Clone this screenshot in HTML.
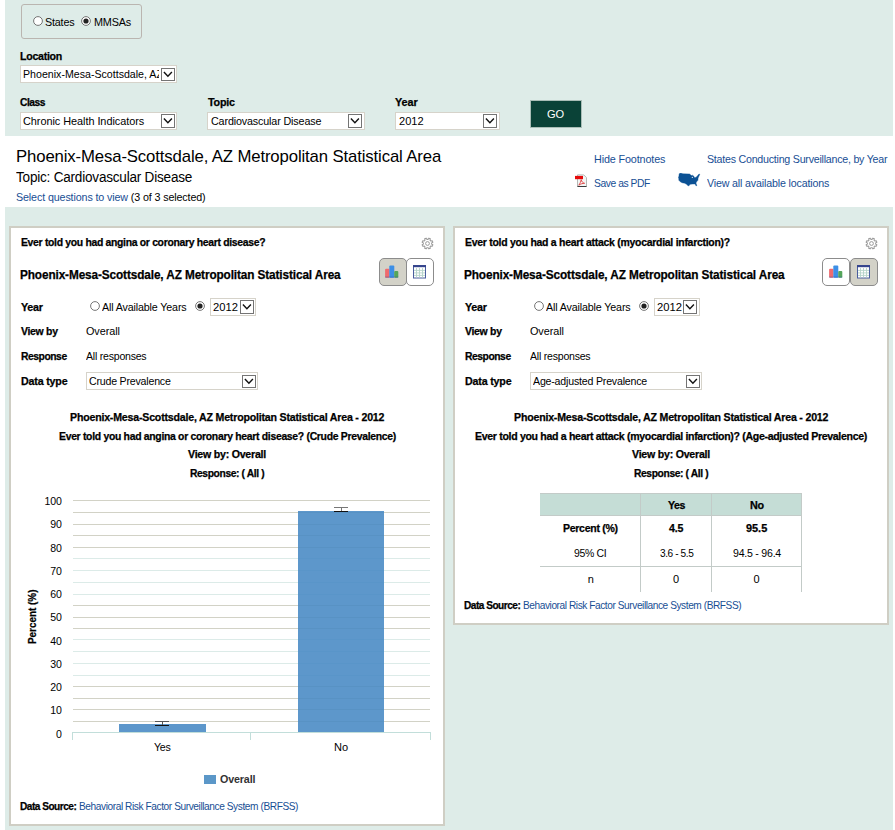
<!DOCTYPE html>
<html><head><meta charset="utf-8"><title>BRFSS Prevalence and Trends Data</title>
<style>
html,body{margin:0;padding:0;background:#fff;}
body{width:895px;height:830px;position:relative;overflow:hidden;font-family:"Liberation Sans",sans-serif;font-size:11px;color:#000;}
.x{position:absolute;white-space:nowrap;line-height:20px;height:20px;transform-origin:0 0;font-size:11px;}
.bd{font-weight:bold;-webkit-text-stroke:0.25px currentColor;}
.bn{font-weight:bold;}
.b{position:absolute;box-sizing:border-box;}
.g{position:absolute;background:#deece8;}
.sel{position:absolute;box-sizing:border-box;background:#fff;border:1px solid #d6d3ca;height:18px;}
a{color:#174e94;text-decoration:none;}
.card{position:absolute;background:#fff;border:2px solid #cfcec4;box-sizing:border-box;}
.btn{position:absolute;box-sizing:border-box;width:28px;height:28px;border:1px solid #8c8c8c;border-radius:5px;background:#fff;}
.btn.on{background:#d3d2c8;}
.hl{position:absolute;height:1px;}
</style></head><body>
<div class="g" style="left:5px;top:0;width:888px;height:136px;"></div>
<div class="g" style="left:5px;top:207px;width:888px;height:623px;"></div>

<div class="b" style="left:21px;top:4px;width:121px;height:35px;border:1px solid #bab5b0;border-radius:3px;"></div>

<div class="b" style="left:530px;top:100px;width:52px;height:28px;background:#0a4237;border:1px solid #a9bdb6;"></div>

<!-- pdf icon -->
<svg class="b" style="left:574px;top:174px;" width="14" height="14" viewBox="0 0 14 14"><path d="M3.500 0.900h6.300l2.700 2.700v8.900h-9z" fill="#f3f6f5" stroke="#b4b8b6" stroke-width="1"/><rect x="3.500" y="12" width="9" height="1" fill="#3a3a3a"/><rect x="1" y="1.900" width="8" height="3.300" fill="#e60a0a"/><path d="M4.800 11.200c1.200-1.800 2.200-3.800 2.400-5.800M4.800 11.200c1.800-1.300 3.800-1.900 5.800-1.900M7.200 6c0.500 1.600 1.800 3 3.400 3.300" fill="none" stroke="#e03c3c" stroke-width="0.900"/></svg>
<!-- us map -->
<svg class="b" style="left:678px;top:173px;" width="23" height="14" viewBox="0 0 23 14"><path d="M1.15 0.80 L2.70 0.05 L4.90 0.80 L11.60 1.00 L13.40 2.60 L14.30 2.15 L15.70 3.00 L16.30 4.60 L17.90 4.40 L19.70 2.60 L21.00 1.00 L21.80 1.25 L21.00 3.00 L20.10 5.05 L19.90 7.30 L18.80 8.60 L17.90 10.00 L18.60 11.75 L18.80 12.60 L18.10 12.90 L17.00 10.90 L14.30 11.10 L12.10 11.30 L10.75 12.90 L9.85 12.60 L8.50 11.30 L6.70 10.20 L4.05 9.70 L2.05 8.60 L0.90 7.30 L0.70 5.05 L0.25 4.40 L0.90 3.30Z" fill="#0b5194" stroke="#0b5194" stroke-width="0.400" stroke-linejoin="round"/><circle cx="14.300" cy="4.400" r="0.550" fill="#fff"/></svg>

<svg class="b" style="left:31.6px;top:14.7px;" width="12" height="12" viewBox="0 0 12 12"><circle cx="6" cy="6" r="4.400" fill="#fff" stroke="#666" stroke-width="0.900"/></svg>
<svg class="b" style="left:80.4px;top:14.7px;" width="12" height="12" viewBox="0 0 12 12"><circle cx="6" cy="6" r="4.400" fill="#fff" stroke="#666" stroke-width="0.900"/><circle cx="6" cy="6" r="2.600" fill="#222"/></svg>
<div class="sel" style="left:20px;top:65px;width:157px;"></div><svg class="b" style="left:161px;top:68px;" width="14" height="13" viewBox="0 0 14 13"><rect x="0.500" y="0.500" width="13" height="12" fill="#fff" stroke="#747474" stroke-width="1"/><path d="M2.900 4.00 L6.900 8.30 L10.900 4.00" fill="none" stroke="#111" stroke-width="1.400"/></svg>
<div class="sel" style="left:20px;top:112px;width:157px;"></div><svg class="b" style="left:161px;top:114px;" width="14" height="14" viewBox="0 0 14 14"><rect x="0.500" y="0.500" width="13" height="13" fill="#fff" stroke="#747474" stroke-width="1"/><path d="M2.900 4.50 L6.900 8.80 L10.900 4.50" fill="none" stroke="#111" stroke-width="1.400"/></svg>
<div class="sel" style="left:207px;top:112px;width:158px;"></div><svg class="b" style="left:348px;top:114px;" width="14" height="14" viewBox="0 0 14 14"><rect x="0.500" y="0.500" width="13" height="13" fill="#fff" stroke="#747474" stroke-width="1"/><path d="M2.900 4.50 L6.900 8.80 L10.900 4.50" fill="none" stroke="#111" stroke-width="1.400"/></svg>
<div class="sel" style="left:395px;top:112px;width:105px;"></div><svg class="b" style="left:483px;top:114px;" width="14" height="14" viewBox="0 0 14 14"><rect x="0.500" y="0.500" width="13" height="13" fill="#fff" stroke="#747474" stroke-width="1"/><path d="M2.900 4.50 L6.900 8.80 L10.900 4.50" fill="none" stroke="#111" stroke-width="1.400"/></svg>
<div class="card" style="left:9px;top:226px;width:436px;height:600px;"></div>
<svg class="b" style="left:421.1px;top:237.100px;" width="13" height="13" viewBox="0 0 13 13"><path d="M10.65 7.16 L11.84 7.83 L11.21 9.34 L9.90 8.97 L8.97 9.90 L9.34 11.21 L7.83 11.84 L7.16 10.65 L5.84 10.65 L5.17 11.84 L3.66 11.21 L4.03 9.90 L3.10 8.97 L1.79 9.34 L1.16 7.83 L2.35 7.16 L2.35 5.84 L1.16 5.17 L1.79 3.66 L3.10 4.03 L4.03 3.10 L3.66 1.79 L5.17 1.16 L5.84 2.35 L7.16 2.35 L7.83 1.16 L9.34 1.79 L8.97 3.10 L9.90 4.03 L11.21 3.66 L11.84 5.17 L10.65 5.84Z" fill="none" stroke="#9a9a9a" stroke-width="1.050" stroke-linejoin="round"/><circle cx="6.500" cy="6.500" r="1.900" fill="none" stroke="#9a9a9a" stroke-width="1"/></svg>
<div class="btn on" style="left:379px;top:258px;width:27.500px;"><svg style="position:absolute;left:4px;top:5px" width="18" height="16" viewBox="0 0 18 16"><rect x="1.100" y="4.700" width="4.400" height="9.100" rx="1" fill="#ef6b6e"/><rect x="5.300" y="1.600" width="5" height="12.200" rx="1" fill="#3d8fe6"/><rect x="10.200" y="7" width="4.100" height="6.800" rx="1" fill="#55a65a"/><rect x="1.100" y="12.500" width="13.200" height="1.300" fill="#2a50a8" fill-opacity="0.350"/></svg></div>
<div class="btn" style="left:406px;top:258px;"><svg style="position:absolute;left:4px;top:5px" width="18" height="18" viewBox="0 0 18 18"><rect x="2.500" y="1.600" width="12" height="12.400" fill="#fff" stroke="#4a5e9e" stroke-width="1"/><rect x="2" y="1.100" width="13" height="2.100" fill="#33438c"/><path d="M5.500 4v9.500M8.500 4v9.500M11.500 4v9.500M3 6.400h11M3 8.900h11M3 11.400h11" stroke="#b4d4c8" stroke-width="0.900" fill="none"/></svg></div>
<svg class="b" style="left:88.8px;top:300.3px;" width="12" height="12" viewBox="0 0 12 12"><circle cx="6" cy="6" r="4.400" fill="#fff" stroke="#666" stroke-width="0.900"/></svg>
<svg class="b" style="left:193.6px;top:300.3px;" width="12" height="12" viewBox="0 0 12 12"><circle cx="6" cy="6" r="4.400" fill="#fff" stroke="#666" stroke-width="0.900"/><circle cx="6" cy="6" r="2.600" fill="#222"/></svg>
<div class="sel" style="left:210px;top:298px;width:46px;"></div><svg class="b" style="left:240px;top:300px;" width="14" height="14" viewBox="0 0 14 14"><rect x="0.500" y="0.500" width="13" height="13" fill="#fff" stroke="#747474" stroke-width="1"/><path d="M2.900 4.50 L6.900 8.80 L10.900 4.50" fill="none" stroke="#111" stroke-width="1.400"/></svg>
<div class="sel" style="left:86px;top:372px;width:172px;"></div><svg class="b" style="left:242px;top:375px;" width="14" height="13" viewBox="0 0 14 13"><rect x="0.500" y="0.500" width="13" height="12" fill="#fff" stroke="#747474" stroke-width="1"/><path d="M2.900 4.00 L6.900 8.30 L10.900 4.00" fill="none" stroke="#111" stroke-width="1.400"/></svg>
<div class="card" style="left:453px;top:226px;width:436px;height:399px;"></div>
<svg class="b" style="left:865.1px;top:237.100px;" width="13" height="13" viewBox="0 0 13 13"><path d="M10.65 7.16 L11.84 7.83 L11.21 9.34 L9.90 8.97 L8.97 9.90 L9.34 11.21 L7.83 11.84 L7.16 10.65 L5.84 10.65 L5.17 11.84 L3.66 11.21 L4.03 9.90 L3.10 8.97 L1.79 9.34 L1.16 7.83 L2.35 7.16 L2.35 5.84 L1.16 5.17 L1.79 3.66 L3.10 4.03 L4.03 3.10 L3.66 1.79 L5.17 1.16 L5.84 2.35 L7.16 2.35 L7.83 1.16 L9.34 1.79 L8.97 3.10 L9.90 4.03 L11.21 3.66 L11.84 5.17 L10.65 5.84Z" fill="none" stroke="#9a9a9a" stroke-width="1.050" stroke-linejoin="round"/><circle cx="6.500" cy="6.500" r="1.900" fill="none" stroke="#9a9a9a" stroke-width="1"/></svg>
<div class="btn" style="left:822px;top:258px;width:27.500px;"><svg style="position:absolute;left:5px;top:5px" width="18" height="16" viewBox="0 0 18 16"><rect x="1.100" y="4.700" width="4.400" height="9.100" rx="1" fill="#ef6b6e"/><rect x="5.300" y="1.600" width="5" height="12.200" rx="1" fill="#3d8fe6"/><rect x="10.200" y="7" width="4.100" height="6.800" rx="1" fill="#55a65a"/><rect x="1.100" y="12.500" width="13.200" height="1.300" fill="#2a50a8" fill-opacity="0.350"/></svg></div>
<div class="btn on" style="left:850px;top:258px;"><svg style="position:absolute;left:4px;top:5px" width="18" height="18" viewBox="0 0 18 18"><rect x="2.500" y="1.600" width="12" height="12.400" fill="#fff" stroke="#4a5e9e" stroke-width="1"/><rect x="2" y="1.100" width="13" height="2.100" fill="#33438c"/><path d="M5.500 4v9.500M8.500 4v9.500M11.500 4v9.500M3 6.400h11M3 8.900h11M3 11.400h11" stroke="#b4d4c8" stroke-width="0.900" fill="none"/></svg></div>
<svg class="b" style="left:532.8px;top:300.3px;" width="12" height="12" viewBox="0 0 12 12"><circle cx="6" cy="6" r="4.400" fill="#fff" stroke="#666" stroke-width="0.900"/></svg>
<svg class="b" style="left:637.6px;top:300.3px;" width="12" height="12" viewBox="0 0 12 12"><circle cx="6" cy="6" r="4.400" fill="#fff" stroke="#666" stroke-width="0.900"/><circle cx="6" cy="6" r="2.600" fill="#222"/></svg>
<div class="sel" style="left:654px;top:298px;width:46px;"></div><svg class="b" style="left:683px;top:300px;" width="14" height="14" viewBox="0 0 14 14"><rect x="0.500" y="0.500" width="13" height="13" fill="#fff" stroke="#747474" stroke-width="1"/><path d="M2.900 4.50 L6.900 8.80 L10.900 4.50" fill="none" stroke="#111" stroke-width="1.400"/></svg>
<div class="sel" style="left:530px;top:372px;width:172px;"></div><svg class="b" style="left:686px;top:375px;" width="14" height="13" viewBox="0 0 14 13"><rect x="0.500" y="0.500" width="13" height="12" fill="#fff" stroke="#747474" stroke-width="1"/><path d="M2.900 4.00 L6.900 8.30 L10.900 4.00" fill="none" stroke="#111" stroke-width="1.400"/></svg>
<svg class="b" style="left:0;top:480px" width="445" height="320" viewBox="0 480 445 320" shape-rendering="crispEdges">
<rect x="73" y="500" width="357" height="1" fill="#d2d2c6"/>
<rect x="73" y="512" width="357" height="1" fill="#d2d2c6"/>
<rect x="73" y="524" width="357" height="1" fill="#d2d2c6"/>
<rect x="73" y="535" width="357" height="1" fill="#d2d2c6"/>
<rect x="73" y="547" width="357" height="1" fill="#d2d2c6"/>
<rect x="73" y="558" width="357" height="1" fill="#dcebe8"/>
<rect x="73" y="570" width="357" height="1" fill="#dcebe8"/>
<rect x="73" y="582" width="357" height="1" fill="#dcebe8"/>
<rect x="73" y="594" width="357" height="1" fill="#dcebe8"/>
<rect x="73" y="605" width="357" height="1" fill="#d2d2c6"/>
<rect x="73" y="617" width="357" height="1" fill="#d2d2c6"/>
<rect x="73" y="628" width="357" height="1" fill="#d2d2c6"/>
<rect x="73" y="639" width="357" height="1" fill="#dcebe8"/>
<rect x="73" y="651" width="357" height="1" fill="#dcebe8"/>
<rect x="73" y="663" width="357" height="1" fill="#dcebe8"/>
<rect x="73" y="675" width="357" height="1" fill="#dcebe8"/>
<rect x="73" y="686" width="357" height="1" fill="#d2d2c6"/>
<rect x="73" y="698" width="357" height="1" fill="#d2d2c6"/>
<rect x="73" y="709" width="357" height="1" fill="#d2d2c6"/>
<rect x="73" y="721" width="357" height="1" fill="#d2d2c6"/>
<rect x="119" y="724" width="87" height="8" fill="#4789c4" fill-opacity="0.880"/>
<rect x="298" y="511" width="86" height="221" fill="#4789c4" fill-opacity="0.880"/>
<rect x="72" y="732" width="359" height="1" fill="#c2deda"/>
<rect x="72" y="732" width="1" height="8" fill="#c2deda"/>
<rect x="250" y="732" width="1" height="8" fill="#c2deda"/>
<rect x="430" y="732" width="1" height="8" fill="#c2deda"/>
<rect x="155" y="721" width="14" height="1" fill="#555"/><rect x="155" y="725" width="14" height="1" fill="#111"/><rect x="162" y="722" width="1" height="3" fill="#555"/>
<rect x="334" y="507" width="14" height="1" fill="#777"/><rect x="334" y="511" width="14" height="1" fill="#111"/><rect x="341" y="508" width="1" height="3" fill="#777"/>
<rect x="204" y="775" width="12" height="9" fill="#5b97c8"/>
</svg>
<div class="x bd" style="left:21.700px;top:643.500px;transform-origin:0 0;transform:rotate(-90deg) scaleX(0.900);">Percent (%)</div>
<div class="b" style="left:540px;top:494px;width:262px;height:22px;background:#c5ddd6;"></div>
<div class="hl" style="left:540px;top:493px;width:262px;background:#c3cbc8;"></div>
<div class="hl" style="left:540px;top:515px;width:262px;background:#c3cbc8;"></div>
<div class="hl" style="left:540px;top:566px;width:262px;background:#c3cbc8;"></div>
<div class="b" style="left:640px;top:493px;width:1px;height:99px;background:#c3cbc8;"></div>
<div class="b" style="left:711px;top:493px;width:1px;height:99px;background:#c3cbc8;"></div>
<div class="b" style="left:801px;top:493px;width:1px;height:99px;background:#c3cbc8;"></div>
<div class="b" style="left:21px;top:66px;width:138px;height:16px;overflow:hidden;"><div class="x" style="left:1.6px;top:-2px;transform:scaleX(.9655);">Phoenix-Mesa-Scottsdale, AZ</div></div>
<div class="x" style="left:32px;width:30px;text-align:right;top:724.19px;transform-origin:100% 0;transform:scaleX(0.96);">0</div>
<div class="x" style="left:32px;width:30px;text-align:right;top:700.19px;transform-origin:100% 0;transform:scaleX(0.96);">10</div>
<div class="x" style="left:32px;width:30px;text-align:right;top:677.19px;transform-origin:100% 0;transform:scaleX(0.96);">20</div>
<div class="x" style="left:32px;width:30px;text-align:right;top:654.19px;transform-origin:100% 0;transform:scaleX(0.96);">30</div>
<div class="x" style="left:32px;width:30px;text-align:right;top:631.19px;transform-origin:100% 0;transform:scaleX(0.96);">40</div>
<div class="x" style="left:32px;width:30px;text-align:right;top:607.19px;transform-origin:100% 0;transform:scaleX(0.96);">50</div>
<div class="x" style="left:32px;width:30px;text-align:right;top:584.19px;transform-origin:100% 0;transform:scaleX(0.96);">60</div>
<div class="x" style="left:32px;width:30px;text-align:right;top:561.19px;transform-origin:100% 0;transform:scaleX(0.96);">70</div>
<div class="x" style="left:32px;width:30px;text-align:right;top:538.19px;transform-origin:100% 0;transform:scaleX(0.96);">80</div>
<div class="x" style="left:32px;width:30px;text-align:right;top:514.19px;transform-origin:100% 0;transform:scaleX(0.96);">90</div>
<div class="x" style="left:32px;width:30px;text-align:right;top:491.19px;transform-origin:100% 0;transform:scaleX(0.96);">100</div>
<div class="x" style="left:44.66px;top:12.19px;transform:scaleX(0.9796);letter-spacing:-0.189px;">States</div>
<div class="x" style="left:93.91px;top:12.19px;transform:scaleX(0.9840);letter-spacing:-0.172px;">MMSAs</div>
<div class="x bd" style="left:20.48px;top:46.19px;transform:scaleX(0.9634);letter-spacing:-0.282px;">Location</div>
<div class="x bd" style="left:20.27px;top:92.19px;transform:scaleX(0.9337);letter-spacing:-0.519px;">Class</div>
<div class="x" style="left:23.38px;top:111.19px;transform:scaleX(0.9913);letter-spacing:-0.051px;">Chronic Health Indicators</div>
<div class="x bd" style="left:207.71px;top:92.19px;transform:scaleX(0.9756);letter-spacing:-0.201px;">Topic</div>
<div class="x" style="left:210.52px;top:111.19px;transform:scaleX(0.9752);letter-spacing:-0.140px;">Cardiovascular Disease</div>
<div class="x bd" style="left:394.95px;top:92.19px;transform:scaleX(0.9858);letter-spacing:-0.094px;">Year</div>
<div class="x" style="left:398.56px;top:111.19px;transform:scaleX(1.0053);">2012</div>
<div class="x" style="left:547.40px;top:103.69px;transform:scaleX(1.0080);color:#fff;">GO</div>
<div class="x" style="left:15.84px;top:146.61px;font-size:17px;transform:scaleX(0.9839);letter-spacing:-0.129px;">Phoenix-Mesa-Scottsdale, AZ Metropolitan Statistical Area</div>
<div class="x" style="left:16.00px;top:167.15px;font-size:14px;transform:scaleX(0.9681);letter-spacing:-0.221px;">Topic: Cardiovascular Disease</div>
<div class="x" style="left:15.58px;top:187.19px;transform:scaleX(0.9742);letter-spacing:-0.129px;"><a>Select questions to view</a> (3 of 3 selected)</div>
<div class="x" style="left:593.92px;top:149.19px;transform:scaleX(0.9810);letter-spacing:-0.133px;color:#174e94;">Hide Footnotes</div>
<div class="x" style="left:707.46px;top:149.19px;transform:scaleX(0.9700);letter-spacing:-0.252px;color:#174e94;">States Conducting Surveillance, by Year</div>
<div class="x" style="left:594.23px;top:173.19px;transform:scaleX(0.9379);letter-spacing:-0.472px;color:#174e94;">Save as PDF</div>
<div class="x" style="left:707.37px;top:173.19px;transform:scaleX(0.9684);letter-spacing:-0.158px;color:#174e94;">View all available locations</div>
<div class="x bd" style="left:20.61px;top:232.19px;transform:scaleX(0.9449);letter-spacing:-0.326px;">Ever told you had angina or coronary heart disease?</div>
<div class="x bd" style="left:19.66px;top:264.84px;font-size:12px;transform:scaleX(0.9824);letter-spacing:-0.109px;">Phoenix-Mesa-Scottsdale, AZ Metropolitan Statistical Area</div>
<div class="x bd" style="left:21.44px;top:297.19px;transform:scaleX(0.9752);letter-spacing:-0.270px;">Year</div>
<div class="x" style="left:102.40px;top:297.19px;transform:scaleX(0.9719);letter-spacing:-0.143px;">All Available Years</div>
<div class="x" style="left:213.30px;top:297.19px;transform:scaleX(1.0190);">2012</div>
<div class="x bd" style="left:21.14px;top:321.19px;transform:scaleX(0.9502);letter-spacing:-0.308px;">View by</div>
<div class="x" style="left:85.73px;top:321.19px;transform:scaleX(0.9861);letter-spacing:-0.069px;">Overall</div>
<div class="x bd" style="left:20.87px;top:346.19px;transform:scaleX(0.9372);letter-spacing:-0.480px;">Response</div>
<div class="x" style="left:85.97px;top:346.19px;transform:scaleX(0.9602);letter-spacing:-0.240px;">All responses</div>
<div class="x bd" style="left:20.86px;top:371.19px;transform:scaleX(0.9687);letter-spacing:-0.177px;">Data type</div>
<div class="x" style="left:89.39px;top:371.19px;transform:scaleX(0.9641);letter-spacing:-0.211px;">Crude Prevalence</div>
<div class="x bd" style="left:70.48px;top:407.19px;transform:scaleX(0.9638);letter-spacing:-0.203px;">Phoenix-Mesa-Scottsdale, AZ Metropolitan Statistical Area - 2012</div>
<div class="x bd" style="left:58.87px;top:426.19px;transform:scaleX(0.9455);letter-spacing:-0.315px;">Ever told you had angina or coronary heart disease? (Crude Prevalence)</div>
<div class="x bd" style="left:188.14px;top:444.19px;transform:scaleX(0.9618);letter-spacing:-0.229px;">View by: Overall</div>
<div class="x bd" style="left:190.48px;top:463.19px;transform:scaleX(0.9322);letter-spacing:-0.396px;">Response: ( All )</div>
<div class="x bd" style="left:464.61px;top:232.19px;transform:scaleX(0.9504);letter-spacing:-0.278px;">Ever told you had a heart attack (myocardial infarction)?</div>
<div class="x bd" style="left:463.66px;top:264.84px;font-size:12px;transform:scaleX(0.9824);letter-spacing:-0.109px;">Phoenix-Mesa-Scottsdale, AZ Metropolitan Statistical Area</div>
<div class="x bd" style="left:465.44px;top:297.19px;transform:scaleX(0.9752);letter-spacing:-0.270px;">Year</div>
<div class="x" style="left:546.40px;top:297.19px;transform:scaleX(0.9719);letter-spacing:-0.143px;">All Available Years</div>
<div class="x" style="left:657.30px;top:297.19px;transform:scaleX(1.0190);">2012</div>
<div class="x bd" style="left:465.14px;top:321.19px;transform:scaleX(0.9502);letter-spacing:-0.308px;">View by</div>
<div class="x" style="left:529.73px;top:321.19px;transform:scaleX(0.9861);letter-spacing:-0.069px;">Overall</div>
<div class="x bd" style="left:464.87px;top:346.19px;transform:scaleX(0.9372);letter-spacing:-0.480px;">Response</div>
<div class="x" style="left:529.97px;top:346.19px;transform:scaleX(0.9602);letter-spacing:-0.240px;">All responses</div>
<div class="x bd" style="left:464.86px;top:371.19px;transform:scaleX(0.9687);letter-spacing:-0.177px;">Data type</div>
<div class="x" style="left:533.40px;top:371.19px;transform:scaleX(0.9636);letter-spacing:-0.199px;">Age-adjusted Prevalence</div>
<div class="x bd" style="left:514.48px;top:407.19px;transform:scaleX(0.9638);letter-spacing:-0.203px;">Phoenix-Mesa-Scottsdale, AZ Metropolitan Statistical Area - 2012</div>
<div class="x bd" style="left:474.86px;top:426.19px;transform:scaleX(0.9614);letter-spacing:-0.339px;">Ever told you had a heart attack (myocardial infarction)? (Age-adjusted Prevalence)</div>
<div class="x bd" style="left:632.14px;top:444.19px;transform:scaleX(0.9618);letter-spacing:-0.229px;">View by: Overall</div>
<div class="x bd" style="left:634.48px;top:463.19px;transform:scaleX(0.9322);letter-spacing:-0.396px;">Response: ( All )</div>
<div class="x" style="left:153.73px;top:737.19px;transform:scaleX(0.9669);letter-spacing:-0.291px;">Yes</div>
<div class="x" style="left:333.50px;top:737.19px;transform:scaleX(1.0029);">No</div>
<div class="x bn" style="left:219.64px;top:769.19px;transform:scaleX(0.9745);letter-spacing:-0.151px;color:#333;">Overall</div>
<div class="x bd" style="left:20.16px;top:796.19px;transform:scaleX(0.9163);letter-spacing:-0.536px;">Data Source:</div>
<div class="x" style="left:78.62px;top:796.19px;transform:scaleX(0.9212);letter-spacing:-0.452px;color:#174e94;">Behavioral Risk Factor Surveillance System (BRFSS)</div>
<div class="x bd" style="left:464.16px;top:594.69px;transform:scaleX(0.9163);letter-spacing:-0.536px;">Data Source:</div>
<div class="x" style="left:522.63px;top:594.69px;transform:scaleX(0.9199);letter-spacing:-0.464px;color:#174e94;">Behavioral Risk Factor Surveillance System (BRFSS)</div>
<div class="x bd" style="left:668.44px;top:494.79px;transform:scaleX(0.9622);letter-spacing:-0.471px;">Yes</div>
<div class="x bd" style="left:749.75px;top:494.79px;transform:scaleX(0.9795);letter-spacing:-0.297px;">No</div>
<div class="x bd" style="left:563.04px;top:517.99px;transform:scaleX(0.9560);letter-spacing:-0.290px;">Percent (%)</div>
<div class="x bd" style="left:669.14px;top:517.99px;transform:scaleX(0.9639);letter-spacing:-0.223px;">4.5</div>
<div class="x bd" style="left:746.23px;top:517.99px;transform:scaleX(0.9938);letter-spacing:-0.024px;">95.5</div>
<div class="x" style="left:574.43px;top:542.69px;transform:scaleX(0.9515);letter-spacing:-0.366px;">95% CI</div>
<div class="x" style="left:660.37px;top:542.69px;transform:scaleX(0.9183);letter-spacing:-0.442px;">3.6 - 5.5</div>
<div class="x" style="left:732.79px;top:542.69px;transform:scaleX(0.9609);letter-spacing:-0.242px;">94.5 - 96.4</div>
<div class="x" style="left:587.71px;top:568.59px;">n</div>
<div class="x" style="left:672.90px;top:568.59px;">0</div>
<div class="x" style="left:753.51px;top:568.59px;">0</div>
</body></html>
